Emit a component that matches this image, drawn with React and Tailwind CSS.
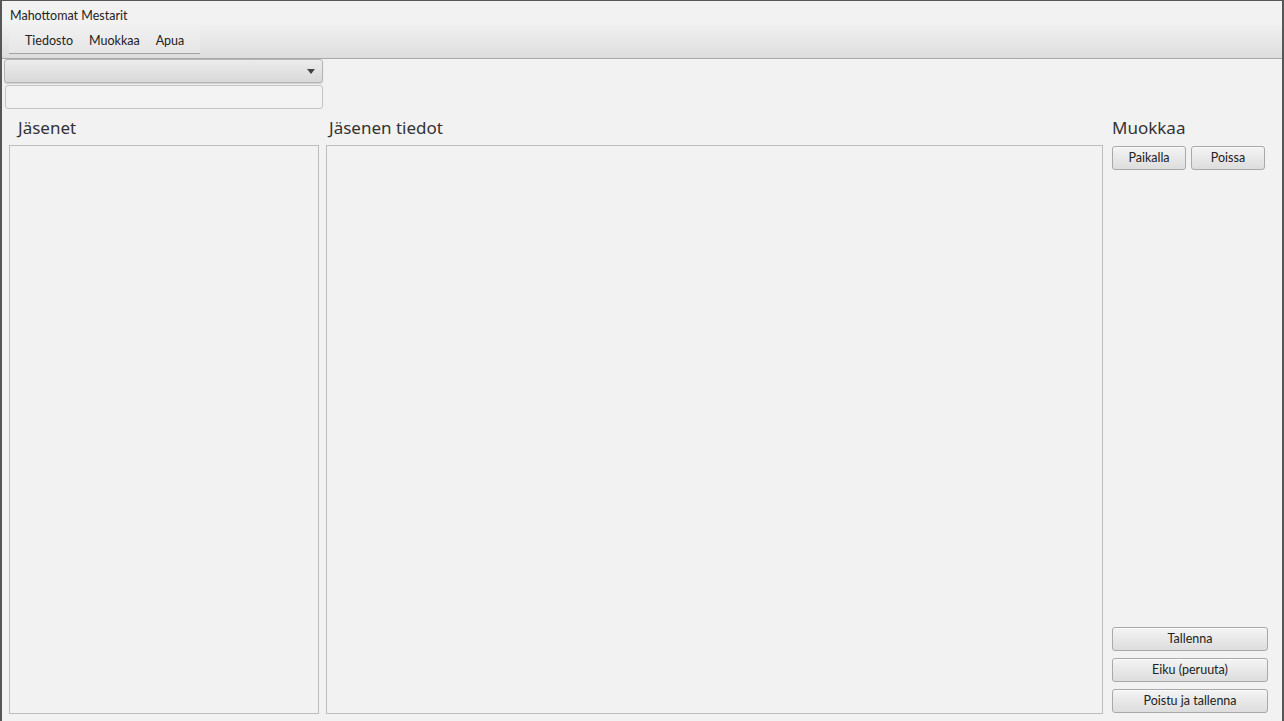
import React from 'react';

function Btn({ children, className = '' }) {
  return (
    <div
      className={`h-[24px] flex items-center justify-center rounded-[3px] border border-[#a9a9a9] bg-gradient-to-b from-[#f4f4f4] to-[#dddddd] text-[12.5px] text-[#222] shadow-[inset_0_1px_0_#fbfbfb] ${className}`}
      style={{ fontFamily: 'Lato, "Noto Sans", sans-serif' }}
    >
      {children}
    </div>
  );
}

export default function App() {
  const font = { fontFamily: '"Noto Sans", "Open Sans", sans-serif' };
  const small = { fontFamily: 'Lato, "Noto Sans", sans-serif' };

  return (
    <div
      className="w-[1284px] h-[721px] border-t border-l-2 border-r-2 border-[#565656] bg-[#f2f2f2] flex flex-col overflow-hidden"
      style={font}
    >
      {/* title */}
      <div className="h-[23px] pl-2 pt-[7px] text-[12.5px] leading-[15px] text-[#222]" style={small}>
        Mahottomat Mestarit
      </div>

      {/* menu bar */}
      <div className="h-[35px] border-b border-[#a8a8a8] bg-gradient-to-b from-[#f1f1f1] to-[#dddddd] pl-[7px] pt-[5px]">
        <div
          className="w-[191px] h-[25px] pt-px border-b border-[#a3a3a3] bg-gradient-to-b from-[#efefef] to-[#e6e6e6] flex items-center pl-4 gap-[16px] text-[12.5px] text-[#222]"
          style={small}
        >
          <span>Tiedosto</span>
          <span>Muokkaa</span>
          <span>Apua</span>
        </div>
      </div>

      {/* combo + field */}
      <div className="pl-[2px] flex flex-col gap-[2px]">
        <div className="w-[319px] h-[24px] rounded-[3px] border border-[#b4b4b4] bg-gradient-to-b from-[#ececec] to-[#d9d9d9] shadow-[0_1px_1px_rgba(0,0,0,0.15)] flex items-center justify-end pr-[7px]">
          <svg width="8" height="5" viewBox="0 0 8 5">
            <path d="M0 0 L8 0 L4 5 Z" fill="#444" />
          </svg>
        </div>
        <div className="ml-px w-[318px] h-[24px] rounded-[3px] border border-[#c4c4c4] bg-[#f3f3f3]" />
      </div>

      {/* main area */}
      <div className="flex-1 flex pl-[7px] pt-[5px] pb-[7px] min-h-0">
        <div className="w-[310px] flex flex-col">
          <div className="h-[31px] pl-[9px] pb-[4px] flex items-center text-[17px] text-[#333]">Jäsenet</div>
          <div className="flex-1 border border-[#bdbdbd]" />
        </div>

        <div className="ml-[7px] w-[777px] flex flex-col">
          <div className="h-[31px] pl-[3px] pb-[4px] flex items-center text-[17px] text-[#333]">Jäsenen tiedot</div>
          <div className="flex-1 border border-[#bdbdbd]" />
        </div>

        <div className="ml-[9px] w-[156px] flex flex-col">
          <div className="h-[31px] pb-[4px] flex items-center text-[17px] text-[#333]">Muokkaa</div>
          <div className="flex gap-[5px] pt-px">
            <Btn className="w-[74px]">Paikalla</Btn>
            <Btn className="w-[74px]">Poissa</Btn>
          </div>
          <div className="flex-1" />
          <div className="flex flex-col gap-[7px] mb-[1px]">
            <Btn>Tallenna</Btn>
            <Btn>Eiku (peruuta)</Btn>
            <Btn>Poistu ja tallenna</Btn>
          </div>
        </div>
      </div>
    </div>
  );
}
